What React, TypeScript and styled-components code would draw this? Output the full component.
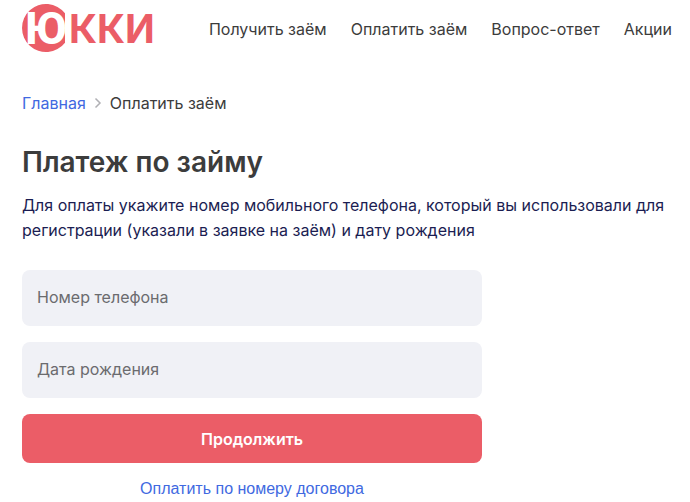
import React from "react";
import styled, { createGlobalStyle } from "styled-components";

const GlobalStyle = createGlobalStyle`
  *, *::before, *::after { box-sizing: border-box; }
  body {
    margin: 0;
    background: #fff;
    color: #3c3c3c;
    font-family: Inter, "Noto Sans", sans-serif;
    font-size: 16px;
    line-height: 24px;
  }
`;

const Page = styled.div`
  padding: 0 18px 0 22px;
`;

const Header = styled.header`
  display: flex;
  align-items: center;
  justify-content: space-between;
  height: 58px;
`;

const LogoLink = styled.a`
  display: block;
  color: #eb5d67;
`;

const LogoMark = styled.svg`
  display: block;
  overflow: visible;
`;

const LogoInitial = styled.text`
  fill: #fff;
  font-family: Roboto, sans-serif;
  font-size: 44px;
  font-weight: 800;
`;

const LogoRest = styled.text`
  font-family: Inter, sans-serif;
  font-size: 39px;
  font-weight: 700;
`;

const Nav = styled.nav`
  display: flex;
  gap: 24px;
`;

const NavLink = styled.a`
  color: inherit;
  text-decoration: none;
  white-space: nowrap;
`;

const Breadcrumbs = styled.nav`
  display: flex;
  align-items: center;
  gap: 8px;
  margin-top: 33px;
`;

const Crumb = styled.a`
  color: #4169e1;
  text-decoration: none;
`;

const Chevron = styled.svg`
  display: block;
`;

const Title = styled.h1`
  margin: 28px 0 0;
  font-size: 28px;
  line-height: 38px;
  font-weight: 600;
`;

const Lead = styled.p`
  margin: 12px 0 0;
  color: #1b1d52;
  line-height: 25px;
`;

const Form = styled.form`
  display: flex;
  flex-direction: column;
  gap: 16px;
  max-width: 460px;
  margin-top: 27px;
`;

const Field = styled.input`
  width: 100%;
  height: 56px;
  padding: 0 15px 2px;
  border: 0;
  border-radius: 8px;
  background: #f0f1f6;
  color: #3c3c3c;
  font: inherit;
  &::placeholder { color: #6b6b6e; opacity: 1; }
`;

const Submit = styled.button`
  height: 49px;
  border: 0;
  border-radius: 8px;
  background: #eb5d67;
  color: #fff;
  font: inherit;
  font-weight: 600;
`;

const ContractLink = styled.a`
  align-self: center;
  color: #4169e1;
  font-family: "Liberation Sans", Arial, sans-serif;
  line-height: 20px;
  text-decoration: none;
`;

const Logo = () => (
  <LogoLink href="#" aria-label="Юкки">
    <LogoMark width="136" height="56" viewBox="0 0 136 56" fill="currentColor">
      <path d="M43 12.3A24 24 0 1 0 43 41.7Z" />
      <LogoInitial x="3" y="43">Ю</LogoInitial>
      <LogoRest x="47" y="42">ККИ</LogoRest>
    </LogoMark>
  </LogoLink>
);

export default function App() {
  return (
    <>
      <GlobalStyle />
      <Page>
        <Header>
          <Logo />
          <Nav>
            <NavLink href="#">Получить заём</NavLink>
            <NavLink href="#">Оплатить заём</NavLink>
            <NavLink href="#">Вопрос-ответ</NavLink>
            <NavLink href="#">Акции</NavLink>
          </Nav>
        </Header>
        <main>
          <Breadcrumbs>
            <Crumb href="#">Главная</Crumb>
            <Chevron width="8" height="12" viewBox="0 0 8 12" fill="none" stroke="#b0b0b4" strokeWidth="1.5">
              <path d="M1.5 1.5 6 6 1.5 10.5" />
            </Chevron>
            <span>Оплатить заём</span>
          </Breadcrumbs>
          <Title>Платеж по займу</Title>
          <Lead>
            Для оплаты укажите номер мобильного телефона, который вы использовали для
            регистрации (указали в заявке на заём) и дату рождения
          </Lead>
          <Form>
            <Field type="tel" placeholder="Номер телефона" aria-label="Номер телефона" />
            <Field type="text" placeholder="Дата рождения" aria-label="Дата рождения" />
            <Submit type="button">Продолжить</Submit>
            <ContractLink href="#">Оплатить по номеру договора</ContractLink>
          </Form>
        </main>
      </Page>
    </>
  );
}
